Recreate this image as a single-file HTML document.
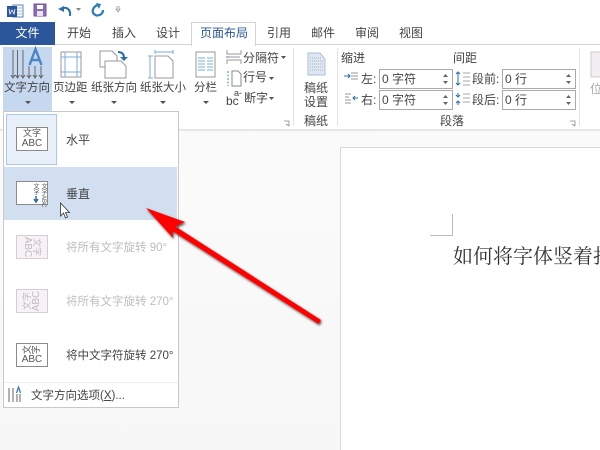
<!DOCTYPE html>
<html lang="zh"><head><meta charset="utf-8">
<style>
html,body{margin:0;padding:0;width:600px;height:450px;overflow:hidden;background:#fafafa}
#r{position:absolute;left:0;top:0;width:600px;height:450px;overflow:hidden;background:linear-gradient(#fcfcfc,#f7f7f7);font-family:"Liberation Sans","Noto Sans CJK SC",sans-serif;color:#444;font-size:12px;filter:blur(.35px)}
.t{position:absolute;white-space:nowrap;line-height:16px}
.b{position:absolute;box-sizing:border-box}
.c{text-align:center}
.in{position:absolute;box-sizing:border-box;width:74px;height:20px;background:#fff;border:1px solid #aaa;line-height:18px;padding-left:2px;font-size:12px;color:#444}
.in i{position:absolute;right:3px;top:3px;width:7px;height:12px;font-style:normal}
.ico{position:absolute;box-sizing:border-box;width:32px;height:24px;background:#fff;border:1px solid #8a8a8a;text-align:center;color:#555;font-size:9px;line-height:9.500px;padding-top:1px}
.ico b{font-weight:normal;font-size:10px}
.dis{border-color:#d8ccd4;background:#f6f2f5;color:#c4bcc2}
.rot{position:absolute;left:50%;top:50%;width:24px;line-height:9px;text-align:center}
svg{position:absolute;left:0;top:0}
</style></head><body><div id="r">
<!-- ribbon bg -->
<div class="b" style="left:0;top:0;width:600px;height:131px;background:#fff;border-bottom:2px solid #e6e6e6"></div>
<div class="b" style="left:0;top:44px;width:600px;height:1px;background:#d4d4d4"></div>
<!-- file tab -->
<div class="b c" style="left:0;top:22px;width:55px;height:23px;background:#2b579a;color:#fff;line-height:23px;font-size:12px">文件</div>
<div class="b" style="left:191px;top:22px;width:65px;height:24px;background:#fff;border:1px solid #d4d4d4;border-bottom:none"></div>
<div class="t" style="left:67px;top:25px">开始</div>
<div class="t" style="left:112px;top:25px">插入</div>
<div class="t" style="left:156px;top:25px">设计</div>
<div class="t" style="left:200px;top:25px;color:#2b579a">页面布局</div>
<div class="t" style="left:267px;top:25px">引用</div>
<div class="t" style="left:311px;top:25px">邮件</div>
<div class="t" style="left:355px;top:25px">审阅</div>
<div class="t" style="left:399px;top:25px">视图</div>
<!-- text dir hover -->
<div class="b" style="left:3px;top:47px;width:49px;height:65px;background:#c5d8f0"></div>
<!-- separators -->
<div class="b" style="left:293px;top:48px;width:1px;height:78px;background:#e2e2e2"></div>
<div class="b" style="left:337px;top:48px;width:1px;height:78px;background:#e2e2e2"></div>
<div class="b" style="left:579px;top:48px;width:1px;height:78px;background:#e2e2e2"></div>
<svg width="600" height="450" fill="none">
 <!-- word icon -->
 <rect x="13" y="5" width="10" height="12" fill="#fff" stroke="#5a86c0"/>
 <path d="M15 8h7M15 11h7M15 14h7" stroke="#a0bcdc"/>
 <rect x="7" y="6" width="10" height="11" fill="#2b579a"/>
 <path d="M9 9l1 5 2-4 2 4 1-5" stroke="#fff" stroke-width=".8"/>
 <!-- save -->
 <rect x="34" y="4" width="12" height="12" fill="#8a6fb0" stroke="#7a4fa0"/>
 <rect x="37" y="5" width="6" height="4" fill="#fff"/>
 <rect x="37" y="11" width="6" height="5" fill="#e9e2f0"/>
 <!-- undo -->
 <path d="M61 9c5-3 10 0 9 7" stroke="#2b6ea8" stroke-width="2"/>
 <path d="M58 9l6-3v6z" fill="#2b6ea8"/>
 <path d="M76 8h5l-2.500 3z" fill="#888"/>
 <!-- redo -->
 <path d="M99 5c-5 0-8 6-5 9 3 3 9 1 9-4" stroke="#2b7ab8" stroke-width="2.200"/>
 <path d="M96 3l5 1-2 5z" fill="#2b7ab8"/>
 <path d="M116 7h4M116 9h4l-2 3z" stroke="#888" stroke-width=".7"/>
 <!-- text direction -->
 <path d="M13 50v27M17.500 50v27M23 50v27M29 66v11M35 66v11M41 66v11" stroke="#666"/>
 <path d="M11 75l2 3 2-3M15.500 75l2 3 2-3M21 75l2 3 2-3M27 75l2 3 2-3M33 75l2 3 2-3M39 75l2 3 2-3" stroke="#666"/>
 <path d="M29.500 65l6-16 6 16M31.500 60h8" stroke="#4a86c4" stroke-width="2.400"/>
 <!-- margins -->
 <rect x="61" y="52" width="20" height="25" stroke="#999" fill="#fff"/>
 <path d="M65 52v25M77 52v25M61 57h20M61 72h20" stroke="#7aaedc"/>
 <!-- orientation -->
 <path d="M100 51h12l5 5v11h-17z" fill="#fff" stroke="#999"/>
 <path d="M105 61h16l5 5v12h-21z" fill="#fff" stroke="#999"/>
 <path d="M118 52c4 0 6 2 6 6" stroke="#2b6ea8" stroke-width="2"/>
 <path d="M120 57h8l-4 4z" fill="#2b6ea8"/>
 <!-- size -->
 <path d="M155 52h18M155 50v4M173 50v4M150 56v22M148 56h5M148 78h5" stroke="#7aaedc"/>
 <path d="M155 56h13l5 5v17h-18z" fill="#fff" stroke="#999"/>
 <!-- columns -->
 <rect x="196" y="52" width="19" height="25" fill="#fff" stroke="#999"/>
 <path d="M198 58h7M207 58h6M198 61h7M207 61h6M198 64h7M207 64h6M198 67h7M207 67h6M198 70h7M207 70h6" stroke="#7aaedc"/>
 <!-- breaks -->
 <path d="M227 50v4h14v-4M227 64v-4h14v4M227 57h13" stroke="#999"/>
 <path d="M226 57h3" stroke="#4a86c4"/>
 <path d="M228 71v15" stroke="#4a86c4" stroke-dasharray="2 1.500"/>
 <path d="M232 71h6l3 3v12h-9z" fill="#fff" stroke="#888"/>
 <!-- dropdown arrows -->
 <path d="M25 101h6l-3 3zM69 101h6l-3 3zM111 101h6l-3 3zM160 101h6l-3 3zM203 101h6l-3 3zM281 56h5l-2.500 3zM269 77h5l-2.500 3zM269 97h5l-2.500 3z" fill="#555"/>
 <!-- launchers -->
 <path d="M284 121h5v5M286 124l3 2" stroke="#888" stroke-width=".8"/>
 <path d="M570 121h5v5M572 124l3 2" stroke="#888" stroke-width=".8"/>
 <!-- manuscript -->
 <path d="M308 53h12l5 6v16h-17z" fill="#dfe8f2" stroke="#aebfd2"/>
 <path d="M310 58h12M310 61h13M310 64h13M310 67h13M310 70h13" stroke="#a8b4c2" stroke-dasharray="1 1"/>
 <!-- indent icons -->
 <path d="M351 73h7M351 76h7M351 79h7" stroke="#999"/>
 <path d="M344 76h6M348 74l2 2-2 2" stroke="#2b6ea8"/>
 <path d="M345 94h6M345 97h4M345 100h6M345 103h6" stroke="#999"/>
 <path d="M358 98h-5M355 96l-2 2 2 2" stroke="#2b6ea8"/>
 <!-- spacing icons -->
 <path d="M458 72v13M456 74l2-2 2 2M456 83l2 2 2-2" stroke="#2b6ea8"/>
 <path d="M463 73h7M463 77h7M463 81h7M463 85h7" stroke="#aaa"/>
 <path d="M458 93v4M456 95l2 2 2-2M458 101v4M456 103l2-2 2 2" stroke="#2b6ea8"/>
 <path d="M463 94h7M463 98h7M463 102h7" stroke="#aaa"/>
 <!-- position icon -->
 <rect x="591" y="52" width="14" height="25" fill="#f2eef1" stroke="#ccc"/>
</svg>
<!-- labels -->
<div class="t" style="left:4px;top:80px;font-size:11.500px">文字方向</div>
<div class="t" style="left:53px;top:80px;font-size:11.500px">页边距</div>
<div class="t" style="left:91px;top:80px;font-size:11.500px">纸张方向</div>
<div class="t" style="left:140px;top:80px;font-size:11.500px">纸张大小</div>
<div class="t" style="left:194px;top:80px;font-size:11.500px">分栏</div>
<div class="t" style="left:243px;top:50px">分隔符</div>
<div class="t" style="left:243px;top:69px">行号</div>
<div class="t" style="left:244px;top:90px">断字</div>
<div class="t" style="left:226px;top:93px;font-size:12px">bc</div>
<div class="t" style="left:234px;top:85px;font-size:9px">a-</div>
<div class="t c" style="left:304px;top:81px;line-height:14px">稿纸<br>设置</div>
<div class="t" style="left:304px;top:113px">稿纸</div>
<div class="t" style="left:341px;top:50px">缩进</div>
<div class="t" style="left:453px;top:50px">间距</div>
<div class="t" style="left:361px;top:71px">左:</div>
<div class="t" style="left:361px;top:92px">右:</div>
<div class="t" style="left:472px;top:71px">段前:</div>
<div class="t" style="left:472px;top:92px">段后:</div>
<div class="in" style="left:379px;top:69px">0 字符<i><svg width="7" height="12"><path d="M1 4l2.500-3 2.500 3zM1 8l2.500 3 2.500-3z" fill="#666"/></svg></i></div>
<div class="in" style="left:379px;top:90px">0 字符<i><svg width="7" height="12"><path d="M1 4l2.500-3 2.500 3zM1 8l2.500 3 2.500-3z" fill="#666"/></svg></i></div>
<div class="in" style="left:502px;top:69px">0 行<i><svg width="7" height="12"><path d="M1 4l2.500-3 2.500 3zM1 8l2.500 3 2.500-3z" fill="#666"/></svg></i></div>
<div class="in" style="left:502px;top:90px">0 行<i><svg width="7" height="12"><path d="M1 4l2.500-3 2.500 3zM1 8l2.500 3 2.500-3z" fill="#666"/></svg></i></div>
<div class="t" style="left:440px;top:113px">段落</div>
<div class="t" style="left:590px;top:81px;color:#aaa">位</div>
<!-- page -->
<div class="b" style="left:340px;top:147px;width:270px;height:303px;background:#fff;border:1px solid #d8d8d8;border-bottom:none"></div>
<div class="b" style="left:430px;top:214px;width:23px;height:22px;border-right:1px solid #bbb;border-bottom:1px solid #bbb"></div>
<div class="t" style="left:453px;top:243px;font-size:20px;line-height:24px;color:#333;font-family:'Noto Serif CJK SC','Liberation Serif',serif">如何将字体竖着打</div>
<!-- dropdown menu -->
<div class="b" style="left:3px;top:111px;width:176px;height:297px;background:#fff;border:1px solid #c8c8c8"></div>
<div class="b" style="left:6px;top:114px;width:51px;height:51px;background:#e8f0fa;border:1px solid #a9c8ec"></div>
<div class="b" style="left:4px;top:167px;width:173px;height:53px;background:#d2dff0"></div>
<div class="ico" style="left:16px;top:127px">文字<br><b>ABC</b></div>
<div class="ico" style="left:16px;top:181px"></div>
<div class="t" style="left:32px;top:183px;font-size:6px;line-height:6px;writing-mode:vertical-rl;color:#555">文字</div>
<div class="t" style="left:40px;top:183px;font-size:6px;line-height:6px;writing-mode:vertical-rl;color:#555">文字ABC</div>
<svg width="600" height="450" fill="none" style="z-index:1"><path d="M36 196v5M34 199l2 3 2-3" stroke="#2b6ea8" stroke-width="1.500"/></svg>
<div class="ico dis" style="left:16px;top:235px;padding:0"><div class="rot" style="transform:translate(-50%,-50%) rotate(90deg)">文字<br><b>ABC</b></div></div>
<div class="ico dis" style="left:16px;top:289px;padding:0"><div class="rot" style="transform:translate(-50%,-50%) rotate(-90deg)">文字<br><b>ABC</b></div></div>
<div class="ico" style="left:16px;top:343px"><span style="display:inline-block;transform:rotate(-90deg)">文</span><span style="display:inline-block;transform:rotate(-90deg)">字</span><br><b>ABC</b></div>
<div class="t" style="left:66px;top:132px">水平</div>
<div class="t" style="left:66px;top:186px">垂直</div>
<div class="t" style="left:66px;top:240px;font-size:11.500px;color:#c0bcbc">将所有文字旋转 90°</div>
<div class="t" style="left:66px;top:294px;font-size:11.500px;color:#c0bcbc">将所有文字旋转 270°</div>
<div class="t" style="left:66px;top:348px;font-size:11.500px">将中文字符旋转 270°</div>
<div class="b" style="left:4px;top:382px;width:174px;height:1px;background:#eee"></div>
<div class="t" style="left:31px;top:388px;font-size:11.500px">文字方向选项(<u>X</u>)...</div>
<svg width="600" height="450" fill="none" style="z-index:2">
 <path d="M9 388v14M13 388v14M17 394v8M20 394v8" stroke="#666"/>
 <path d="M16.500 393l2-6 2 6" stroke="#3b7cc0" stroke-width="1.300"/>
 <!-- cursor -->
 <path d="M60.500 203v13l3-3 2 5 2-1-2-4.500h4z" fill="#fff" stroke="#333" stroke-width=".8"/>
 <!-- arrow -->
 <defs><filter id="s" x="-20%" y="-20%" width="140%" height="140%"><feDropShadow dx="1" dy="1.500" stdDeviation="1.200" flood-color="#000" flood-opacity=".7"/></filter></defs>
 <path d="M146 208L185 222 175.500 226.500 321 320 318.500 324 172.500 231 173 238Z" fill="#f00" filter="url(#s)"/>
</svg>
</div></body></html>
